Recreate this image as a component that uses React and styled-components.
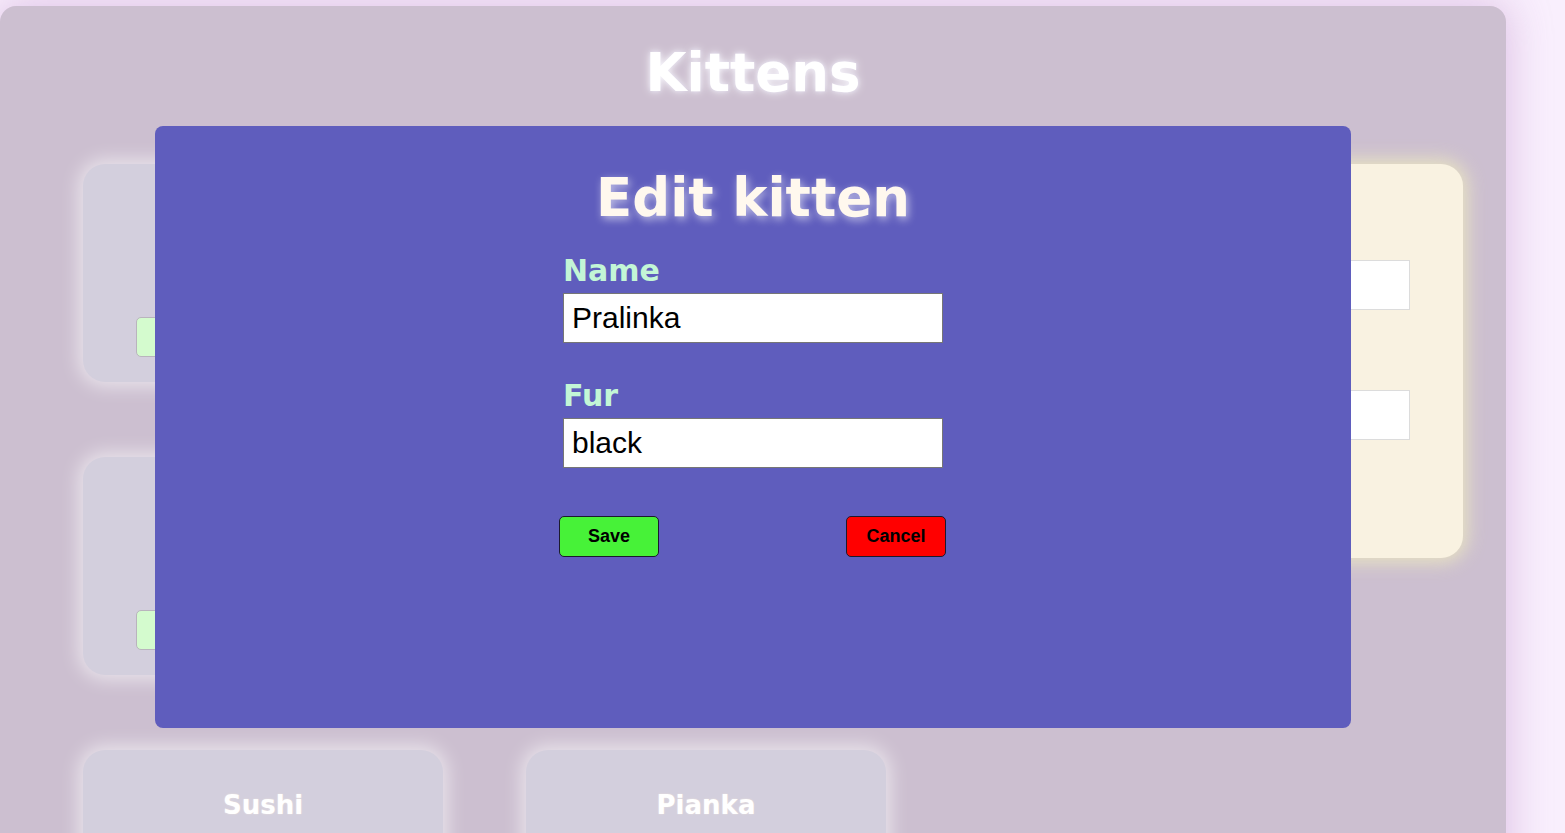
import React from "react";
import styled, { createGlobalStyle } from "styled-components";

const GlobalStyle = createGlobalStyle`
  html, body {
    margin: 0;
    padding: 0;
    background: #f9effd;
    font-family: "DejaVu Sans", Verdana, sans-serif;
    overflow: hidden;
  }
`;

const Page = styled.div`
  padding-top: 6px;
  min-height: 100vh;
  box-sizing: border-box;
`;

const Board = styled.main`
  position: relative;
  width: 1506px;
  min-height: 1100px;
  background: #ccbfd0;
  border-radius: 16px;
  box-shadow: 0 0 40px 4px rgba(214, 180, 222, 0.75);
  padding-top: 36px;
  box-sizing: border-box;
`;

const Title = styled.h1`
  margin: 0;
  text-align: center;
  font-family: "DejaVu Sans", Verdana, sans-serif;
  font-weight: 700;
  font-size: 53px;
  line-height: 62px;
  color: #ffffff;
  text-shadow: 0 0 10px rgba(255, 255, 255, 0.85), 0 0 4px rgba(230, 230, 255, 0.6);
`;

const Main = styled.div`
  display: flex;
  align-items: flex-start;
  gap: 91px;
  padding: 60px 43px 0 83px;
`;

const CardGrid = styled.div`
  display: grid;
  grid-template-columns: repeat(2, 360px);
  column-gap: 83px;
  row-gap: 75px;
`;

const Card = styled.article`
  height: 218px;
  border-radius: 22px;
  background: #d3cfdd;
  box-shadow: 0 0 18px 5px rgba(255, 255, 255, 0.55);
  padding: 40px 53px 0;
  box-sizing: border-box;
  display: flex;
  flex-direction: column;
  align-items: center;
`;

const CardName = styled.h2`
  margin: 0;
  font-family: "DejaVu Sans", Verdana, sans-serif;
  font-size: 26px;
  line-height: 30px;
  font-weight: 700;
  color: #ffffff;
  text-shadow: 0 0 2px rgba(255, 240, 220, 0.6);
`;

const CardActions = styled.div`
  margin-top: 83px;
  width: 100%;
  display: flex;
  justify-content: space-between;
`;

const CardButton = styled.button`
  width: 100px;
  height: 40px;
  border-radius: 5px;
  border: 1px solid #b9b4bd;
  background: ${(p) => (p.$danger ? "#f6cfcf" : "#d4fbce")};
  font-family: "Liberation Sans", Arial, sans-serif;
  font-weight: 700;
  font-size: 16px;
  color: #777;
`;

const FormCard = styled.section`
  width: 486px;
  height: 394px;
  border-radius: 22px;
  background: #f9f2e1;
  box-shadow: 0 0 18px 5px rgba(240, 238, 190, 0.75);
  padding: 24px 53px 0;
  box-sizing: border-box;
  display: flex;
  flex-direction: column;
`;

const FormCardTitle = styled.h2`
  margin: 0 0 10px;
  text-align: center;
  font-size: 26px;
  line-height: 30px;
  color: #c9b9a0;
`;

const SideLabel = styled.label`
  font-size: 22px;
  line-height: 32px;
  font-weight: 700;
  color: #b7a99a;
`;

const SideInput = styled.input`
  width: 100%;
  height: 50px;
  box-sizing: border-box;
  border: 1px solid #dcdcdc;
  background: #ffffff;
  margin-bottom: 48px;
`;

const Overlay = styled.div`
  position: absolute;
  top: 120px;
  left: 50%;
  transform: translateX(-50%);
  width: 1196px;
  height: 602px;
  background: #5f5dbd;
  border-radius: 8px;
  padding-top: 41px;
  box-sizing: border-box;
`;

const ModalTitle = styled.h2`
  margin: 0;
  text-align: center;
  font-family: "DejaVu Sans", Verdana, sans-serif;
  font-size: 53px;
  line-height: 62px;
  font-weight: 700;
  color: #fff8ee;
  text-shadow: 2px 3px 8px rgba(255, 255, 255, 0.6);
`;

const Form = styled.form`
  width: 387px;
  margin: 25px 0 0 404px;
  display: flex;
  flex-direction: column;
`;

const Field = styled.div`
  display: flex;
  flex-direction: column;
  padding-left: 4px;
  margin-bottom: ${(p) => p.$gap || 0}px;
`;

const Label = styled.label`
  font-family: "DejaVu Sans", Verdana, sans-serif;
  font-weight: 700;
  font-size: 30px;
  line-height: 34px;
  color: #c3f6d6;
  margin-bottom: 5px;
`;

const Input = styled.input`
  width: 380px;
  height: 50px;
  box-sizing: border-box;
  border: 1px solid #767676;
  background: #ffffff;
  padding: 0 8px;
  font-family: "Liberation Sans", Arial, sans-serif;
  font-size: 30px;
  color: #000;
  outline: none;
`;

const Buttons = styled.div`
  display: flex;
  justify-content: space-between;
`;

const ActionButton = styled.button`
  width: 100px;
  height: 41px;
  border-radius: 5px;
  border: 1px solid #1c1a2e;
  background: ${(p) => p.$bg};
  font-family: "Liberation Sans", Arial, sans-serif;
  font-weight: 700;
  font-size: 18px;
  color: #000;
  cursor: pointer;
`;

const kittens = [
  { id: 1, name: "Pralinka" },
  { id: 2, name: "Mruczek" },
  { id: 3, name: "Filemon" },
  { id: 4, name: "Puszek" },
  { id: 5, name: "Sushi" },
  { id: 6, name: "Pianka" },
];

export default function App() {
  return (
    <>
      <GlobalStyle />
      <Page>
        <Board>
          <Title>Kittens</Title>
          <Main>
            <CardGrid>
              {kittens.map((k) => (
                <Card key={k.id}>
                  <CardName>{k.name}</CardName>
                  <CardActions>
                    <CardButton>Edit</CardButton>
                    <CardButton $danger>Delete</CardButton>
                  </CardActions>
                </Card>
              ))}
            </CardGrid>
            <FormCard>
              <FormCardTitle>Add kitten</FormCardTitle>
              <SideLabel>Name</SideLabel>
              <SideInput />
              <SideLabel>Fur</SideLabel>
              <SideInput />
            </FormCard>
          </Main>
          <Overlay>
            <ModalTitle>Edit kitten</ModalTitle>
            <Form onSubmit={(e) => e.preventDefault()}>
              <Field $gap={36}>
                <Label>Name</Label>
                <Input defaultValue="Pralinka" />
              </Field>
              <Field $gap={48}>
                <Label>Fur</Label>
                <Input defaultValue="black" />
              </Field>
              <Buttons>
                <ActionButton type="submit" $bg="#47f238">Save</ActionButton>
                <ActionButton type="button" $bg="#ff0000">Cancel</ActionButton>
              </Buttons>
            </Form>
          </Overlay>
        </Board>
      </Page>
    </>
  );
}
